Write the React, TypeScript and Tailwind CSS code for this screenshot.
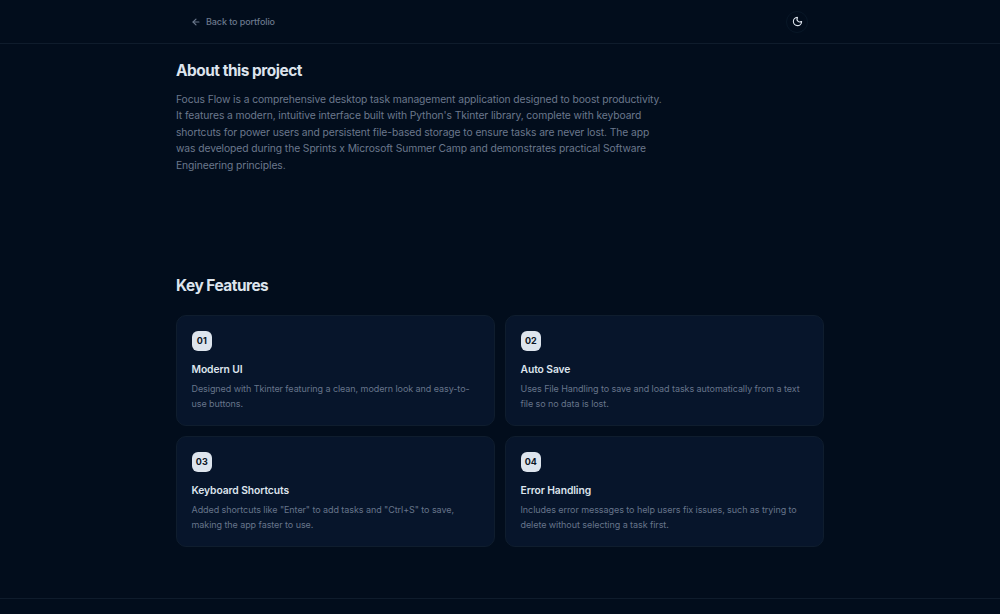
import { ArrowLeft, Moon } from "lucide-react";

const features = [
  {
    title: "Modern UI",
    lines: ["Designed with Tkinter featuring a clean, modern look and easy-to-", "use buttons."],
  },
  {
    title: "Auto Save",
    lines: ["Uses File Handling to save and load tasks automatically from a text", "file so no data is lost."],
  },
  {
    title: "Keyboard Shortcuts",
    lines: ['Added shortcuts like "Enter" to add tasks and "Ctrl+S" to save,', "making the app faster to use."],
  },
  {
    title: "Error Handling",
    lines: ["Includes error messages to help users fix issues, such as trying to", "delete without selecting a task first."],
  },
];

const about = [
  "Focus Flow is a comprehensive desktop task management application designed to boost productivity.",
  "It features a modern, intuitive interface built with Python's Tkinter library, complete with keyboard",
  "shortcuts for power users and persistent file-based storage to ensure tasks are never lost. The app",
  "was developed during the Sprints x Microsoft Summer Camp and demonstrates practical Software",
  "Engineering principles.",
];

function Header() {
  return (
    <header className="h-11 border-b border-[#0f1c2c]">
      <div className="mx-auto flex h-[43px] w-[648px] items-center justify-between pr-4 pl-[15px]">
        <a href="#" className="flex items-center gap-[5px] text-[9px] font-medium tracking-[-0.09px] text-[#6b788c]">
          <ArrowLeft className="h-[10px] w-[10px]" strokeWidth={2.8} />
          Back to portfolio
        </a>
        <button className="flex h-[22px] w-[22px] items-center justify-center rounded-full border border-[#081727] text-[#dde4ed]">
          <Moon className="h-[11px] w-[11px]" strokeWidth={2.4} />
        </button>
      </div>
    </header>
  );
}

export default function App() {
  return (
    <div className="flex h-[614px] flex-col overflow-hidden bg-[#020d1c] font-['Inter',sans-serif]">
      <Header />
      <main className="mx-auto w-[648px] flex-1">
        <section className="h-[215px] pt-[17px]">
          <h2 className="text-[15.4px] leading-5 font-bold tracking-[-0.46px] text-[#dde4ed]">About this project</h2>
          <p className="mt-[10px] text-[10.3px] leading-[16.4px] tracking-[-0.085px] whitespace-nowrap text-[#6b788c]">
            {about.map((line) => (
              <span key={line} className="block">{line}</span>
            ))}
          </p>
        </section>
        <section className="pt-[17px]">
          <h2 className="text-[15.4px] leading-5 font-bold tracking-[-0.48px] text-[#dde4ed]">Key Features</h2>
          <div className="mt-[19px] grid grid-cols-2 gap-[10px]">
            {features.map((feature, index) => (
              <div key={feature.title} className="h-[111px] rounded-[10px] border border-[#0f1d2e] bg-[#07152b] px-[14.5px] pt-[14.5px]">
                <div className="flex h-[20.6px] w-[20.6px] items-center justify-center rounded-md bg-[#dde4ed] text-[9px] font-bold text-[#0b1424]">
                  0{index + 1}
                </div>
                <h3 className="mt-[9.5px] text-[10.3px] leading-4 font-semibold tracking-[-0.08px] text-[#dde4ed]">{feature.title}</h3>
                <p className="mt-[5.6px] text-[9px] leading-[14.4px] tracking-[-0.07px] whitespace-nowrap text-[#66748a]">
                  {feature.lines.map((line) => (
                    <span key={line} className="block">{line}</span>
                  ))}
                </p>
              </div>
            ))}
          </div>
        </section>
      </main>
      <footer className="h-4 border-t border-[#0f1c2c]" />
    </div>
  );
}
